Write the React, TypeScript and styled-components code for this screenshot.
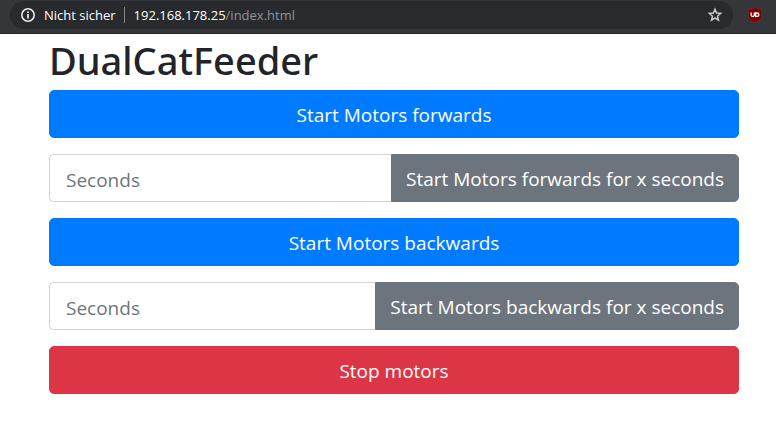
import React from "react";
import styled, { createGlobalStyle, css } from "styled-components";

const GlobalStyle = createGlobalStyle`
  *, *::before, *::after { box-sizing: border-box; }
  body {
    margin: 0;
    background: #fff;
    color: #212529;
    font-family: "Segoe UI", "Open Sans", "Noto Sans", sans-serif;
  }
`;

const BrowserBar = styled.header`
  display: flex;
  align-items: flex-start;
  gap: 15px;
  height: 34px;
  padding: 1px 14px 0 10px;
  background: #35363a;
  border-bottom: 1px solid #241f25;
`;

const AddressBar = styled.div`
  display: flex;
  flex: 1;
  align-items: center;
  height: 28px;
  padding: 0 10px;
  border-radius: 14px;
  background: #282a2d;
  color: #fff;
  font-size: 13px;
  line-height: 20px;
  white-space: nowrap;
`;

const InfoIcon = styled.svg`
  width: 16px;
  height: 16px;
  margin-right: 8px;
`;

const Divider = styled.span`
  width: 1px;
  height: 16px;
  margin: 0 9px 0 8px;
  background: #85868a;
`;

const Address = styled.span`
  flex: 1;
`;

const Path = styled.span`
  color: #919396;
`;

const IconButton = styled.button`
  display: flex;
  padding: 0;
  border: 0;
  background: none;
`;

const ExtensionButton = styled(IconButton)`
  padding-top: 6px;
`;

const Page = styled.main`
  padding: 0 37px 0 49px;
`;

const Title = styled.h1`
  margin: 0 0 8px;
  padding-top: 4px;
  font-family: "Segoe UI", "Noto Sans", sans-serif;
  font-size: 38px;
  font-weight: 500;
  line-height: 44px;
`;

const Controls = styled.form`
  display: flex;
  flex-direction: column;
  gap: 16px;
`;

const tones = { primary: "#007bff", secondary: "#6c757d", danger: "#dc3545" };

const Button = styled.button<{ $tone: keyof typeof tones; $attached?: boolean }>`
  height: 48px;
  padding: 2px 14px 0;
  border: 1px solid ${({ $tone }) => tones[$tone]};
  border-radius: 5px;
  background: ${({ $tone }) => tones[$tone]};
  color: #fff;
  font-family: inherit;
  font-size: 19px;
  line-height: 30px;
  white-space: nowrap;
  cursor: pointer;
  ${({ $attached }) =>
    $attached &&
    css`
      border-top-left-radius: 0;
      border-bottom-left-radius: 0;
    `}
`;

const InputGroup = styled.div`
  display: flex;
`;

const SecondsInput = styled.input`
  flex: 1;
  min-width: 0;
  height: 48px;
  padding: 4px 16px 0;
  border: 1px solid #ced4da;
  border-right: 0;
  border-radius: 5px 0 0 5px;
  background: #fff;
  color: #495057;
  font-family: inherit;
  font-size: 19px;
  &::placeholder {
    color: #6c757d;
    opacity: 1;
  }
`;

function TimedRun({ direction }: { direction: "forwards" | "backwards" }) {
  return (
    <InputGroup>
      <SecondsInput
        type="text"
        inputMode="numeric"
        placeholder="Seconds"
        aria-label={`Seconds to run ${direction}`}
      />
      <Button type="button" $tone="secondary" $attached>
        Start Motors {direction} for x seconds
      </Button>
    </InputGroup>
  );
}

export default function App() {
  return (
    <>
      <GlobalStyle />
      <BrowserBar>
        <AddressBar>
          <InfoIcon viewBox="0 0 16 16" aria-hidden="true">
            <circle cx="8" cy="8" r="6.2" fill="none" stroke="#e8eaed" strokeWidth="1.6" />
            <path d="M7.1 4.4h1.8V6H7.1zM7.1 7.1h1.8v4.5H7.1z" fill="#e8eaed" />
          </InfoIcon>
          <span>Nicht sicher</span>
          <Divider />
          <Address>
            192.168.178.25<Path>/index.html</Path>
          </Address>
          <IconButton type="button" aria-label="Bookmark">
            <svg width="16" height="16" viewBox="0 0 16 16" aria-hidden="true">
              <path
                d="M8 2.3l1.55 3.8 4.1.35-3.1 2.7.93 4L8 11l-3.48 2.15.93-4-3.1-2.7 4.1-.35z"
                fill="none"
                stroke="#c4c7ca"
                strokeWidth="1.5"
              />
            </svg>
          </IconButton>
        </AddressBar>
        <ExtensionButton type="button" aria-label="Content blocker">
          <svg width="14" height="16" viewBox="0 0 14 16" aria-hidden="true">
            <path
              d="M7 .3C5.3 1.5 3 2 .3 2v7c0 3.4 3.1 5.2 6.7 6.7 3.6-1.5 6.7-3.3 6.7-6.7V2C11 2 8.7 1.5 7 .3z"
              fill="#800000"
              stroke="#653b3d"
              strokeWidth=".6"
            />
            <path
              d="M3.1 5.4v2.5a1.6 1.5 0 0 0 3.2 0V5.4M7.6 6h1.6a1.6 1.6 0 0 1 0 3.3H7.6z"
              fill="none"
              stroke="#fff"
              strokeWidth="1.3"
            />
          </svg>
        </ExtensionButton>
      </BrowserBar>
      <Page>
        <Title>DualCatFeeder</Title>
        <Controls>
          <Button type="button" $tone="primary">Start Motors forwards</Button>
          <TimedRun direction="forwards" />
          <Button type="button" $tone="primary">Start Motors backwards</Button>
          <TimedRun direction="backwards" />
          <Button type="button" $tone="danger">Stop motors</Button>
        </Controls>
      </Page>
    </>
  );
}
